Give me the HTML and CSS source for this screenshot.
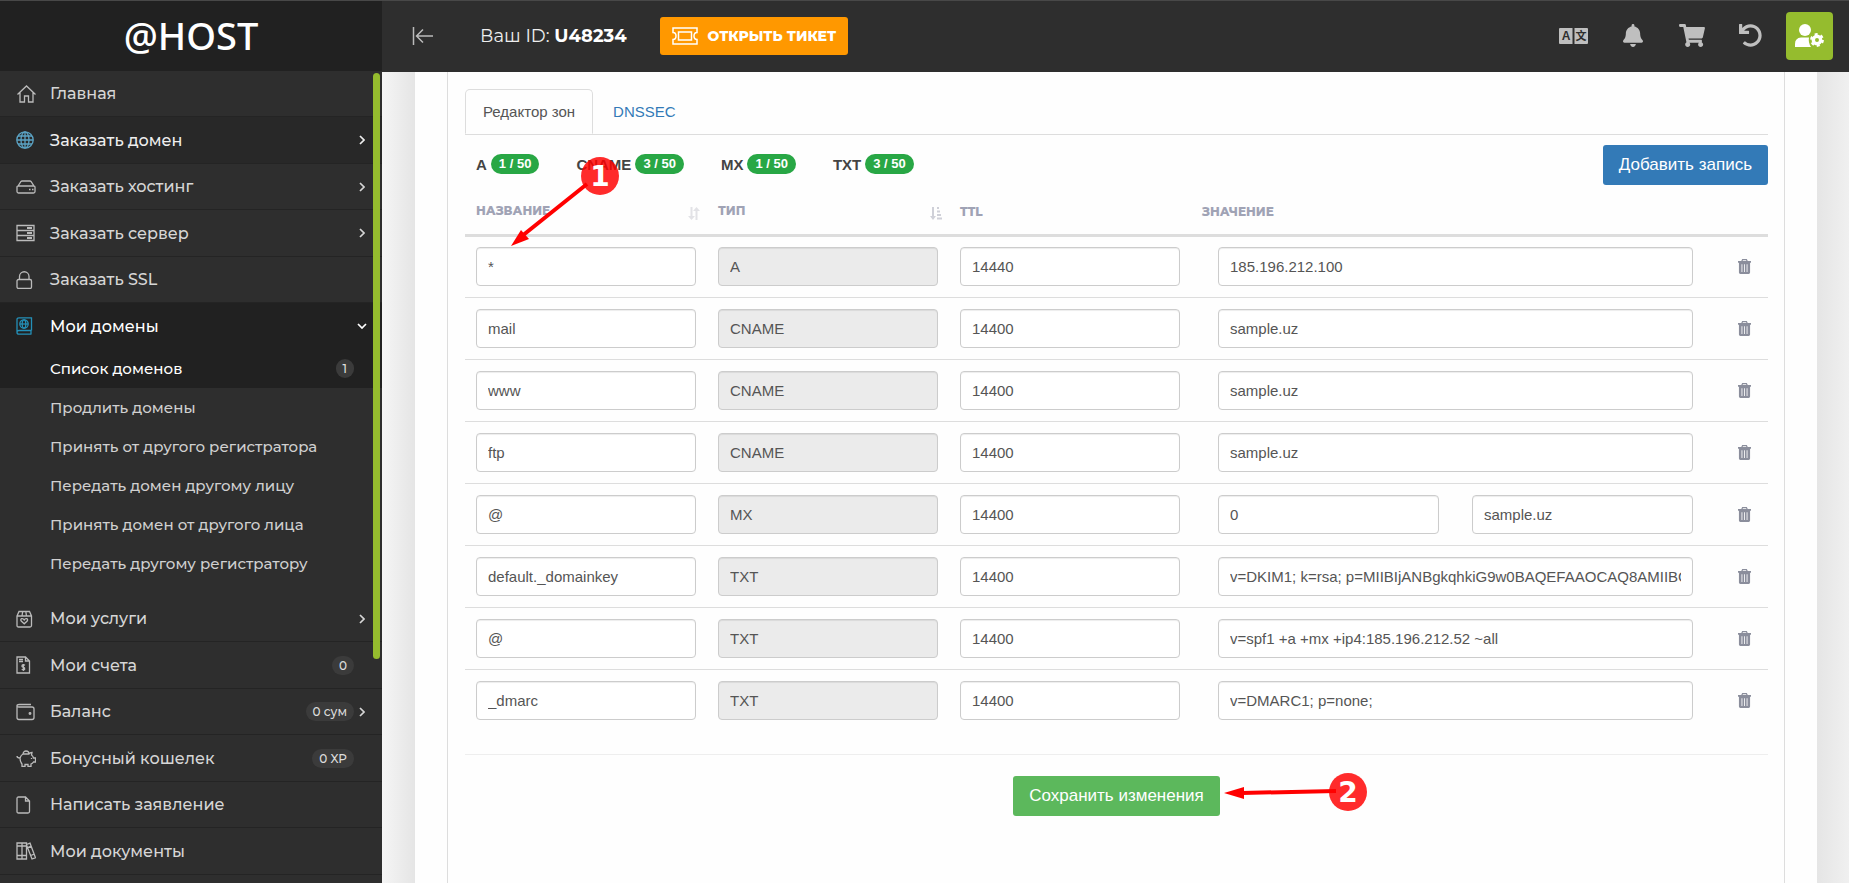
FILE: index.html
```html
<!DOCTYPE html>
<html lang="ru">
<head>
  <meta charset="UTF-8">
  <title>@HOST - Редактор зон</title>
  <meta name="viewport" content="width=device-width, initial-scale=1.0">
  <link rel="stylesheet" href="styles.css">
</head>
<body>

  <!-- shared icons -->
  <svg class="sprite" aria-hidden="true">
    <symbol id="chevron" viewBox="0 0 6 10"><path d="M1 1l4 4-4 4" fill="none" stroke="currentColor" stroke-width="1.7"/></symbol>
    <symbol id="trash" viewBox="0 0 14 16">
      <path fill-rule="evenodd" d="M4.500 0h5l1 2H14v2h-1v10.500Q13 16 11.500 16h-9Q1 16 1 14.500V4H0V2h3.500zM5.300 1.200L5 2h4l-.3-.8zM3.800 5.500v8.500h.9V5.500zm2.750 0v8.500h.9V5.500zm2.750 0v8.500h.9V5.500z" fill="currentColor"/>
    </symbol>
  </svg>

  <aside class="sidebar">
    <a class="logo" href="#">@HOST</a>
    <nav class="menu">
      <a class="menu-item" href="#">
        <svg class="icon" viewBox="0 0 20 18"><path d="M1.500 9.500L10.500 1l9 8.500M4 7.500V17h4.500v-6h4v6H17V7.500"/></svg>
        <span>Главная</span>
      </a>
      <a class="menu-item hovered" href="#">
        <svg class="icon" viewBox="0 0 20 18"><circle cx="9" cy="9" r="8.200"/><ellipse cx="9" cy="9" rx="4" ry="8.200"/><path d="M9 1v16M1 9h16M2 5h14M2 13h14"/></svg>
        <span>Заказать домен</span>
        <svg class="chevron"><use href="#chevron"/></svg>
      </a>
      <a class="menu-item" href="#">
        <svg class="icon" viewBox="0 0 20 18"><path d="M1 9v4.500q0 1.500 1.500 1.500h15q1.500 0 1.500-1.500V9q0-1-1.500-1h-15Q1 8 1 9zM2 8l3-4.500Q5.500 3 6 3h8q.5 0 1 .5L18 8"/><path d="M13 11.500h1.500M16 11.500h1.500"/></svg>
        <span>Заказать хостинг</span>
        <svg class="chevron"><use href="#chevron"/></svg>
      </a>
      <a class="menu-item" href="#">
        <svg class="icon" viewBox="0 0 20 18"><path d="M1 1.500h17v5H1zM1 6.500h17v5H1zM1 11.500h17v5H1z"/><path d="M11 4h5M11 9h5M11 14h5" stroke-width="1.800"/></svg>
        <span>Заказать сервер</span>
        <svg class="chevron"><use href="#chevron"/></svg>
      </a>
      <a class="menu-item" href="#">
        <svg class="icon" viewBox="0 0 20 18"><rect x="1" y="8.500" width="14.500" height="9" rx="1.500"/><path d="M3.500 8.500V5.500a4.700 4.700 0 0 1 9.500 0v3"/></svg>
        <span>Заказать SSL</span>
      </a>

      <div class="menu-group">
        <a class="menu-item active" href="#">
          <svg class="icon" viewBox="0 0 20 18"><path d="M15.500 13.500V.8H3Q1 .8 1 2.500v12.700q0 2 2 2h12.500M15.500 13.500H3q-2 0-2 2M15 13.500V17"/><circle cx="8" cy="7" r="4.200"/><ellipse cx="8" cy="7" rx="1.800" ry="4.200"/><path d="M4 7h8"/></svg>
          <span>Мои домены</span>
          <svg class="chevron open"><use href="#chevron"/></svg>
        </a>
        <a class="submenu-item active" href="#"><span>Список доменов</span><b class="count">1</b></a>
        <a class="submenu-item" href="#">Продлить домены</a>
        <a class="submenu-item" href="#">Принять от другого регистратора</a>
        <a class="submenu-item" href="#">Передать домен другому лицу</a>
        <a class="submenu-item" href="#">Принять домен от другого лица</a>
        <a class="submenu-item" href="#">Передать другому регистратору</a>
      </div>

      <a class="menu-item" href="#">
        <svg class="icon" viewBox="0 0 20 18"><path d="M1 6l2-4.500h10.500l2 4.500v9.500q0 1.500-1.500 1.500H2.500Q1 17 1 15.500zM1 6h14.500M6 6l.7-4.500M10.500 6l-.7-4.500"/><path d="M8.200 13.800L5.200 11q-1-1.700.5-2.300 1.500-.4 2.500 1.200 1-1.600 2.500-1.200 1.500.6.500 2.300z"/></svg>
        <span>Мои услуги</span>
        <svg class="chevron"><use href="#chevron"/></svg>
      </a>
      <a class="menu-item" href="#">
        <svg class="icon" viewBox="0 0 20 18"><path d="M1 1h8.500l4 4v12H1zM9.500 1v4h4M3 3.500h4M3 5.500h4"/><path d="M9 9.200q-2-1.200-2.800 0-.8 1.500 1 2t1.500 2q-.8 1.200-3 0M7.400 8v7"/></svg>
        <span>Мои счета</span>
        <b class="count">0</b>
      </a>
      <a class="menu-item" href="#">
        <svg class="icon" viewBox="0 0 20 18"><path d="M16 4H3Q1 4 1 2.700 1 1.500 3 1.500h12M1 3v11.500Q1 16.500 3 16.500h13q2 0 2-2V6q0-2-2-2"/><circle cx="14" cy="10.500" r=".8"/></svg>
        <span>Баланс</span>
        <b class="count">0 сум</b>
        <svg class="chevron"><use href="#chevron"/></svg>
      </a>
      <a class="menu-item" href="#">
        <svg class="icon" viewBox="0 0 20 18"><path d="M1 7q0 2 3 2 1-3 3-4h6q1-1.500 3-1.500L15.500 6q1.500 1 2 3H19.500v4h-2q-1 1.500-2.500 2v2.500h-3V15.500H9v2H6V15q-2-2-2-6M7 5a3 3 0 0 1 6 0M8.500 5h4M15.500 9v1"/></svg>
        <span>Бонусный кошелек</span>
        <b class="count">0 XP</b>
      </a>
      <a class="menu-item" href="#">
        <svg class="icon" viewBox="0 0 20 18"><path d="M1 2.500Q1 1 2.500 1h7l4 4v10.500q0 1.500-1.500 1.500H2.500Q1 17 1 15.500zM9.500 1v4h4"/></svg>
        <span>Написать заявление</span>
      </a>
      <a class="menu-item" href="#">
        <svg class="icon" viewBox="0 0 20 18"><path d="M1 1h5v16H1zM6 1h4.500v16H6zM1 4h9.500M1 13.500h9.500M10.500 2.500L14 1.200l5.500 14.500-3.500 1.300L10.500 3M11.700 5.500l3.500-1.300M14.700 13.500l3.500-1.300"/></svg>
        <span>Мои документы</span>
      </a>
    </nav>
    <div class="scrollbar"></div>
  </aside>

  <div class="page">
    <header class="topbar">
      <button class="collapse" aria-label="Свернуть меню">
        <svg viewBox="0 0 22 18"><path d="M1.500 0v18M21 9H5M11 2.500L4.500 9l6.500 6.500"/></svg>
      </button>
      <span class="user-id">Ваш ID: <strong>U48234</strong></span>
      <button class="ticket">
        <svg viewBox="0 0 26 18"><path d="M1 1h24v4.500q-3 0-3 3.500t3 3.500V17H1v-4.500q3 0 3-3.500T1 5.500zM6.500 5h13v8h-13z"/></svg>
        Открыть тикет
      </button>
      <div class="tools">
        <button class="tool" aria-label="Язык">
          <svg width="29" height="16" viewBox="0 0 29 16"><path d="M1 0h12.500v16H1q-1 0-1-1V1q0-1 1-1zM15.500 0H28q1 0 1 1v14q0 1-1 1H15.500z"/><text class="glyph" x="7" y="12">A</text><text class="glyph small" x="22" y="12">文</text></svg>
        </button>
        <button class="tool" aria-label="Уведомления">
          <svg width="20" height="23" viewBox="0 0 448 512"><path d="M224 512c35.320 0 63.970-28.650 63.970-64H160.030c0 35.350 28.650 64 63.970 64zm215.390-149.710c-19.320-20.760-55.470-51.990-55.470-154.290 0-77.700-54.480-139.900-127.940-155.160V32c0-17.670-14.320-32-31.980-32s-31.980 14.330-31.980 32v20.840C118.560 68.100 64.080 130.300 64.080 208c0 102.300-36.150 133.530-55.470 154.290-6 6.450-8.660 14.160-8.610 21.710.11 16.400 12.980 32 32.100 32h383.800c19.120 0 32-15.600 32.100-32 .05-7.550-2.610-15.270-8.610-21.710z"/></svg>
        </button>
        <button class="tool" aria-label="Корзина">
          <svg width="26" height="23" viewBox="0 0 576 512"><path d="M528.120 301.319l47.273-208C578.806 78.301 567.391 64 551.990 64H159.208l-9.166-44.810C147.758 8.021 137.930 0 126.529 0H24C10.745 0 0 10.745 0 24v16c0 13.255 10.745 24 24 24h69.883l70.248 343.435C147.325 417.100 136 435.222 136 456c0 30.928 25.072 56 56 56s56-25.072 56-56c0-15.674-6.447-29.835-16.824-40h209.647C430.447 426.165 424 440.326 424 456c0 30.928 25.072 56 56 56s56-25.072 56-56c0-22.172-12.888-41.332-31.579-50.405l5.517-24.276c3.413-15.018-8.002-29.319-23.403-29.319H218.117l-6.545-32h293.145c11.206 0 20.920-7.754 23.403-18.681z"/></svg>
        </button>
        <button class="tool" aria-label="Назад">
          <svg width="23" height="23" viewBox="0 0 512 512"><path d="M212.333 224.333H12c-6.627 0-12-5.373-12-12V12C0 5.373 5.373 0 12 0h48c6.627 0 12 5.373 12 12v78.112C117.773 39.279 184.260 7.470 258.175 8.007c136.906.994 246.448 111.623 246.157 248.532C504.041 393.258 393.120 504 256.333 504c-64.089 0-122.496-24.313-166.510-64.215-5.099-4.622-5.334-12.554-.467-17.420l33.967-33.967c4.474-4.474 11.662-4.717 16.401-.525C170.760 415.336 211.580 432 256.333 432c97.268 0 176-78.716 176-176 0-97.267-78.716-176-176-176-58.496 0-110.280 28.476-142.274 72.333h98.274c6.627 0 12 5.373 12 12v48c0 6.627-5.373 12-12 12z"/></svg>
        </button>
        <button class="tool account" aria-label="Профиль">
          <svg width="29" height="24" viewBox="0 0 29 24"><circle cx="10" cy="6" r="6"/><path d="M0 23v-3q0-6 6-6.500h8q-1 5 2 9.500H1q-1 0-1 0z"/><circle cx="22" cy="16" r="3.700" fill="none" stroke="#fff" stroke-width="3.400"/><circle cx="22" cy="16" r="5.800" fill="none" stroke="#fff" stroke-width="2.200" stroke-dasharray="3 3.070"/></svg>
        </button>
      </div>
    </header>

    <main class="content">
      <div class="card">
        <section class="panel">
          <ul class="tabs">
            <li><a class="tab current" href="#">Редактор зон</a></li>
            <li><a class="tab" href="#">DNSSEC</a></li>
          </ul>

          <div class="limits">
            <span class="limit">A <b class="pill">1 / 50</b></span>
            <span class="limit">CNAME <b class="pill">3 / 50</b></span>
            <span class="limit">MX <b class="pill">1 / 50</b></span>
            <span class="limit">TXT <b class="pill">3 / 50</b></span>
            <button class="btn btn-primary">Добавить запись</button>
          </div>

          <table class="records">
            <colgroup>
              <col class="col-field"><col class="col-field"><col class="col-field"><col><col class="col-action">
            </colgroup>
            <thead>
              <tr>
                <th><div class="head">Название
                  <svg class="sort" viewBox="0 0 12 13"><path d="M3.500 0v10M8.500 13V3" fill="none" stroke="currentColor" stroke-width="2"/><path d="M0 9h7l-3.500 4zM5 4h7L8.500 0z"/></svg></div></th>
                <th><div class="head">Тип
                  <svg class="sort sorted" viewBox="0 0 12 13"><path d="M3 0v10" fill="none" stroke="currentColor" stroke-width="2"/><path d="M0 9h6l-3 4zM7 0h2v2H7zM7 3.500h3v2H7zM7 7h4v2H7zM7 10.500h5v2H7z"/></svg></div></th>
                <th>TTL</th>
                <th>Значение</th>
                <th></th>
              </tr>
            </thead>
            <tbody>
              <tr>
                <td><input type="text" value="*" aria-label="Название"></td>
                <td><input type="text" value="A" aria-label="Тип" disabled></td>
                <td><input type="text" value="14440" aria-label="TTL"></td>
                <td class="value"><div><input type="text" value="185.196.212.100" aria-label="Значение"></div></td>
                <td class="action"><button aria-label="Удалить"><svg><use href="#trash"/></svg></button></td>
              </tr>
              <tr>
                <td><input type="text" value="mail" aria-label="Название"></td>
                <td><input type="text" value="CNAME" aria-label="Тип" disabled></td>
                <td><input type="text" value="14400" aria-label="TTL"></td>
                <td class="value"><div><input type="text" value="sample.uz" aria-label="Значение"></div></td>
                <td class="action"><button aria-label="Удалить"><svg><use href="#trash"/></svg></button></td>
              </tr>
              <tr>
                <td><input type="text" value="www" aria-label="Название"></td>
                <td><input type="text" value="CNAME" aria-label="Тип" disabled></td>
                <td><input type="text" value="14400" aria-label="TTL"></td>
                <td class="value"><div><input type="text" value="sample.uz" aria-label="Значение"></div></td>
                <td class="action"><button aria-label="Удалить"><svg><use href="#trash"/></svg></button></td>
              </tr>
              <tr>
                <td><input type="text" value="ftp" aria-label="Название"></td>
                <td><input type="text" value="CNAME" aria-label="Тип" disabled></td>
                <td><input type="text" value="14400" aria-label="TTL"></td>
                <td class="value"><div><input type="text" value="sample.uz" aria-label="Значение"></div></td>
                <td class="action"><button aria-label="Удалить"><svg><use href="#trash"/></svg></button></td>
              </tr>
              <tr>
                <td><input type="text" value="@" aria-label="Название"></td>
                <td><input type="text" value="MX" aria-label="Тип" disabled></td>
                <td><input type="text" value="14400" aria-label="TTL"></td>
                <td class="value"><div><input type="text" value="0" aria-label="Приоритет"><input type="text" value="sample.uz" aria-label="Значение"></div></td>
                <td class="action"><button aria-label="Удалить"><svg><use href="#trash"/></svg></button></td>
              </tr>
              <tr>
                <td><input type="text" value="default._domainkey" aria-label="Название"></td>
                <td><input type="text" value="TXT" aria-label="Тип" disabled></td>
                <td><input type="text" value="14400" aria-label="TTL"></td>
                <td class="value"><div><input type="text" value="v=DKIM1; k=rsa; p=MIIBIjANBgkqhkiG9w0BAQEFAAOCAQ8AMIIBCgKCAQEA" aria-label="Значение"></div></td>
                <td class="action"><button aria-label="Удалить"><svg><use href="#trash"/></svg></button></td>
              </tr>
              <tr>
                <td><input type="text" value="@" aria-label="Название"></td>
                <td><input type="text" value="TXT" aria-label="Тип" disabled></td>
                <td><input type="text" value="14400" aria-label="TTL"></td>
                <td class="value"><div><input type="text" value="v=spf1 +a +mx +ip4:185.196.212.52 ~all" aria-label="Значение"></div></td>
                <td class="action"><button aria-label="Удалить"><svg><use href="#trash"/></svg></button></td>
              </tr>
              <tr>
                <td><input type="text" value="_dmarc" aria-label="Название"></td>
                <td><input type="text" value="TXT" aria-label="Тип" disabled></td>
                <td><input type="text" value="14400" aria-label="TTL"></td>
                <td class="value"><div><input type="text" value="v=DMARC1; p=none;" aria-label="Значение"></div></td>
                <td class="action"><button aria-label="Удалить"><svg><use href="#trash"/></svg></button></td>
              </tr>
            </tbody>
          </table>

          <div class="save">
            <div class="save-wrap">
              <button class="btn btn-success">Сохранить изменения</button>
              <svg class="step step-2" viewBox="0 0 145 40">
                <path d="M18 21L112 19" stroke="#f00" stroke-width="4"/>
                <path d="M0 21l20-6v12z" fill="#f00"/>
                <circle cx="124" cy="20" r="19"/>
                <text x="124" y="30">2</text>
              </svg>
            </div>
          </div>

          <!-- step 1 -->
          <svg class="step step-1" viewBox="0 0 110 92">
            <circle cx="90" cy="20" r="19"/>
            <path d="M12 80L77 28" stroke="#f00" stroke-width="4"/>
            <path d="M1 90l10-16 8 9z" fill="#f00"/>
            <text x="90" y="30">1</text>
          </svg>
        </section>
      </div>
    </main>
  </div>

</body>
</html>
```
FILE: styles.css
```css
*{
  box-sizing: border-box;
}
html, body {
  height: 100%;
}
body {
  background: #eee;
  border-top: 1px solid #484848;
  color: #555;
  display: flex;
  font-family: "Liberation Sans", Arial, sans-serif;
  font-size: 15px;
  margin: 0;
  overflow: hidden;
}
a{
  text-decoration: none;
}
button{
  border: 0;
  cursor: pointer;
  font-family: inherit;
  padding: 0;
}
.sprite{
  display: none;
}

/*sidebar*/
.sidebar{
  background: #2e2e2e;
  flex: 0 0 382px;
  font-family: Montserrat, Inter, sans-serif;
  font-weight: 500;
  overflow: hidden;
  position: relative;
}
.logo{
  align-items: center;
  background: #212121;
  color: #fff;
  display: flex;
  font-family: "Noto Sans", sans-serif;
  font-size: 38px;
  height: 70px;
  justify-content: center;
  padding-bottom: 2px;
}
.menu-item{
  align-items: center;
  border-bottom: 1px solid #242424;
  color: #d6d6d6;
  display: flex;
  font-size: 16px;
  height: 46px;
  padding: 0 17px 0 16px;
}
.menu-item:nth-child(even){
  height: 47px;
}
.menu-item span, .submenu-item span{
  flex: 1;
}
.menu-item.hovered{
  background: #282828;
  color: #eee;
}
.menu-group .menu-item{
  border-bottom: 0;
}
.menu-item.active, .submenu-item.active{
  background: #212121;
  color: #fff;
}
.menu-group{
  padding-bottom: 13px;
}
.submenu-item{
  align-items: center;
  color: #d0d0d0;
  display: flex;
  font-size: 15px;
  height: 39px;
  padding: 0 17px 0 50px;
}
.icon{
  fill: none;
  height: 18px;
  margin-right: 14px;
  stroke: #bbb;
  stroke-width: 1.3;
  width: 20px;
}
.hovered .icon{
  stroke: #5ba3c4;
}
.active .icon{
  stroke: #2490b8;
}
.chevron{
  height: 10px;
  margin-left: 5px;
  width: 6px;
}
.chevron.open{
  transform: rotate(90deg);
}
.count{
  background: #3b3b3b;
  border-radius: 10px;
  color: #ddd;
  font-size: 12px;
  font-weight: 500;
  line-height: 19px;
  margin-right: 11px;
  padding: 0 7px;
}
.count + .chevron{
  margin-left: -6px;
}
.scrollbar{
  background: #95bc2e;
  border-radius: 4px;
  height: 586px;
  position: absolute;
  right: 2px;
  top: 72px;
  width: 7px;
}

/*top bar*/
.page{
  display: flex;
  flex: 1;
  flex-direction: column;
  min-width: 0;
}
.topbar{
  align-items: center;
  background: #2e2e2e;
  color: #eee;
  display: flex;
  flex: 0 0 71px;
  font-family: Montserrat, Inter, sans-serif;
  padding: 0 16px 2px 30px;
}
.collapse{
  background: none;
  height: 18px;
  width: 22px;
}
.collapse svg{
  fill: none;
  height: 18px;
  stroke: #bbb;
  stroke-width: 1.5;
  width: 22px;
}
.user-id{
  font-size: 18px;
  margin: 0 33px 0 46px;
}
.user-id strong{
  color: #fff;
}
.ticket{
  align-items: center;
  background: #ff9800;
  border-radius: 3px;
  color: #fff;
  display: flex;
  font-size: 14px;
  font-weight: 800;
  gap: 10px;
  height: 38px;
  padding: 0 12px;
  text-transform: uppercase;
}
.ticket svg{
  fill: none;
  height: 18px;
  stroke: #fff;
  stroke-width: 1.5;
  width: 26px;
}
.tools{
  display: flex;
  gap: 12px;
  margin-left: auto;
}
.tool{
  align-items: center;
  background: none;
  display: flex;
  height: 48px;
  justify-content: center;
  width: 47px;
}
.tool svg{
  fill: #bfbfbf;
}
.tool .glyph{
  fill: #2e2e2e;
  font: bold 12px "Liberation Sans", "Noto Sans CJK SC", sans-serif;
  text-anchor: middle;
}
.tool .small{
  font-size: 11px;
}
.tool.account{
  background: #95bc2e;
  border-radius: 4px;
}
.account svg{
  fill: #fff;
}

/*content*/
.content{
  background: linear-gradient(to right, #f5f5f5, #e5e5e5 33px, #e5e5e5 calc(100% - 32px), #f0f0f0);
  flex: 1;
  min-height: 0;
  overflow: hidden;
  padding: 0 32px 0 33px;
}
.card{
  background: #fefefe;
  min-height: 100%;
  padding: 0 32px;
}
.panel{
  border: 1px solid #ddd;
  border-width: 0 1px;
  min-height: 812px;
  padding: 17px 16px 0 17px;
  position: relative;
}
.tabs{
  border-bottom: 1px solid #ddd;
  display: flex;
  list-style: none;
  margin: 0;
  padding: 0;
}
.tab{
  border: 1px solid transparent;
  border-radius: 5px 5px 0 0;
  color: #337ab7;
  display: block;
  font-size: 15px;
  line-height: 43px;
  margin-right: 2px;
  padding: 0 17px;
}
.tab.current{
  background: #fefefe;
  border-color: #ddd;
  border-bottom-color: #fefefe;
  color: #555;
  margin-bottom: -1px;
}

.limits{
  align-items: flex-start;
  color: #444;
  display: flex;
  gap: 37px;
  padding: 10px 0 10px 11px;
}
.limit{
  align-items: center;
  display: flex;
  font-weight: bold;
  gap: 4px;
  height: 38px;
}
.pill{
  background: #28a745;
  border-radius: 10px;
  color: #fff;
  font-size: 13px;
  line-height: 20px;
  padding: 0 8px;
}
.btn{
  border-radius: 3px;
  color: #fff;
  font-size: 17px;
  height: 40px;
  padding: 0 16px;
}
.btn-primary{
  background: #337ab7;
  margin-left: auto;
}
.btn-success{
  background: #5cb85c;
}

.records{
  border-collapse: collapse;
  table-layout: fixed;
  width: 100%;
}
.col-field{
  width: 242px;
}
.col-action{
  width: 47px;
}
.records th{
  border-bottom: 3px solid #ddd;
  color: #a0a3b5;
  font: 800 12px Montserrat, "Open Sans", sans-serif;
  height: 40px;
  padding: 0 11px 6px;
  text-align: left;
  text-transform: uppercase;
}
.head{
  display: flex;
  justify-content: space-between;
}
.sort{
  color: #e2e2e6;
  fill: currentColor;
  height: 13px;
  margin: 4px -4px 0 0;
  width: 12px;
}
.sorted{
  color: #cfd0d8;
}
.records td{
  border-bottom: 1px solid #ddd;
  height: 62px;
  padding: 0 11px;
}
.records tbody tr:last-child td{
  border-bottom: 0;
}
.records input{
  background: #fff;
  border: 1px solid #ccc;
  border-radius: 4px;
  box-shadow: inset 0 1px 1px rgba(0,0,0,0.075);
  color: #555;
  display: block;
  font-family: inherit;
  font-size: 15px;
  height: 39px;
  min-width: 0;
  padding: 0 11px;
  width: 100%;
}
.records input:disabled{
  background: #ebebeb;
}
.records .value{
  padding: 0 28px 0 27px;
}
.value div{
  display: flex;
  gap: 33px;
}
.records .action{
  padding: 0;
}
.action button{
  background: none;
  color: #8b8e9c;
  display: block;
  margin: 0 auto;
}
.action svg{
  display: block;
  height: 15px;
  width: 13px;
}

.save{
  border-top: 1px solid #eee;
  display: flex;
  justify-content: center;
  margin-top: 23px;
  padding-top: 21px;
}
.save-wrap{
  position: relative;
}

/*numbered step markers lie over the page*/
.step{
  pointer-events: none;
  position: absolute;
}
.step circle{
  fill: rgba(255,0,0,0.83);
}
.step text{
  fill: #fff;
  font: bold 28px "DejaVu Sans", sans-serif;
  text-anchor: middle;
}
.step-1{
  height: 92px;
  left: 62px;
  top: 84px;
  width: 110px;
}
.step-2{
  height: 40px;
  left: calc(100% + 4px);
  top: -4px;
  width: 145px;
}
```
